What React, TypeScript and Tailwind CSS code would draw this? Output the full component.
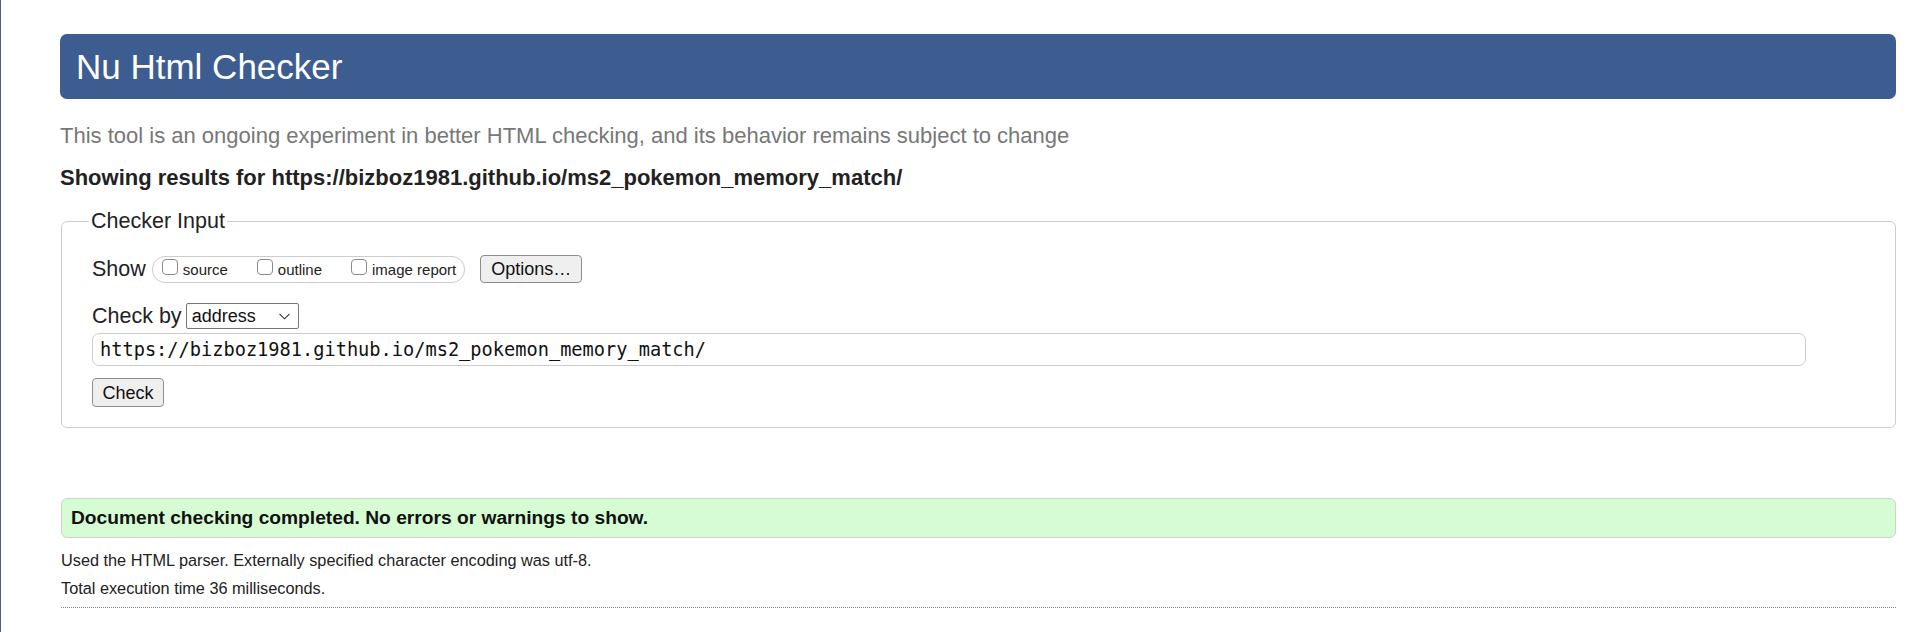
import React from "react";

function Box() {
  return (
    <span className="mb-[5px] inline-block h-[16px] w-[16px] shrink-0 rounded-[4px] border border-[#8a8a8a] bg-white" />
  );
}

export default function App() {
  return (
    <div className="min-h-[632px] w-full border-l border-[#4f5f80] bg-white pl-[59px] pr-[10px] pt-[34px] font-['Liberation_Sans',Arial,sans-serif] text-[#222]">
      <h1 className="h-[65px] rounded-[7px] bg-[#3d5c8f] pl-[16px] pt-[13px] text-[35px] leading-[40px] font-normal text-white">
        Nu Html Checker
      </h1>
      <p className="mt-[24px] text-[22px] leading-[26px] text-[#777]">
        This tool is an ongoing experiment in better HTML checking, and its behavior remains subject to change
      </p>
      <p className="mt-[16px] text-[22px] font-bold leading-[26px] text-[#222]">
        Showing results for https://bizboz1981.github.io/ms2_pokemon_memory_match/
      </p>
      <fieldset className="ml-[1px] mt-[18px] rounded-[6px] border border-[#cccccc] pb-[20px] pl-[30px] pr-[20px] pt-[22px]">
        <legend className="ml-[-3px] px-[2px] text-[21.5px] leading-[24px] text-[#222]">Checker Input</legend>
        <div className="flex h-[28px] items-center">
          <span className="text-[21.5px] leading-[24px]">Show</span>
          <div className="ml-[6px] flex h-[27px] items-center gap-[29px] rounded-[13px] border border-[#cccccc] pl-[9px] pr-[8px]">
            <label className="flex items-center gap-[5px]">
              <Box />
              <span className="text-[15px] leading-[17px]">source</span>
            </label>
            <label className="flex items-center gap-[5px]">
              <Box />
              <span className="text-[15px] leading-[17px]">outline</span>
            </label>
            <label className="flex items-center gap-[5px]">
              <Box />
              <span className="text-[15px] leading-[17px]">image report</span>
            </label>
          </div>
          <button className="ml-[15px] flex h-[28px] w-[102px] items-center justify-center rounded-[4px] border border-[#8e8e8e] bg-[#efefef] text-[18px] leading-[22px] text-[#111]">
            Options…
          </button>
        </div>
        <div className="mt-[20px] flex h-[26px] items-center">
          <span className="text-[21.5px] leading-[24px]">Check by</span>
          <div className="ml-[4px] flex h-[26px] w-[113px] items-center justify-between rounded-[2px] border border-[#767676] bg-white pl-[5px] pr-[8px]">
            <span className="text-[18px] leading-[22px] text-[#111]">address</span>
            <svg width="11" height="7" viewBox="0 0 11 7" className="mt-[1px]">
              <polyline points="0.5,0.8 5.5,5.8 10.5,0.8" fill="none" stroke="#333" strokeWidth="1.1" />
            </svg>
          </div>
        </div>
        <div className="mt-[4px] flex h-[33px] w-[1714px] items-center rounded-[7px] border border-[#cccccc] pl-[7px]">
          <span className="font-['DejaVu_Sans_Mono',monospace] text-[18.65px] leading-[22px] text-[#111]">
            https://bizboz1981.github.io/ms2_pokemon_memory_match/
          </span>
        </div>
        <button className="mt-[12px] flex h-[29px] w-[72px] items-center justify-center rounded-[4px] border border-[#8e8e8e] bg-[#efefef] text-[18px] leading-[22px] text-[#111]">
          Check
        </button>
      </fieldset>
      <div className="ml-[1px] mt-[70px] flex h-[40px] items-center rounded-[6px] border border-[#c8d8c6] bg-[#d6fcd3] pl-[9px]">
        <span className="text-[19.2px] font-bold leading-[22px] text-[#111]">
          Document checking completed. No errors or warnings to show.
        </span>
      </div>
      <p className="ml-[1px] mt-[12px] text-[16.3px] leading-[20px] text-[#222]">
        Used the HTML parser. Externally specified character encoding was utf-8.
      </p>
      <p className="ml-[1px] mt-[8px] text-[16.3px] leading-[20px] text-[#222]">Total execution time 36 milliseconds.</p>
      <div className="ml-[1px] mt-[9px] border-t border-dotted border-[#888]" />
    </div>
  );
}
